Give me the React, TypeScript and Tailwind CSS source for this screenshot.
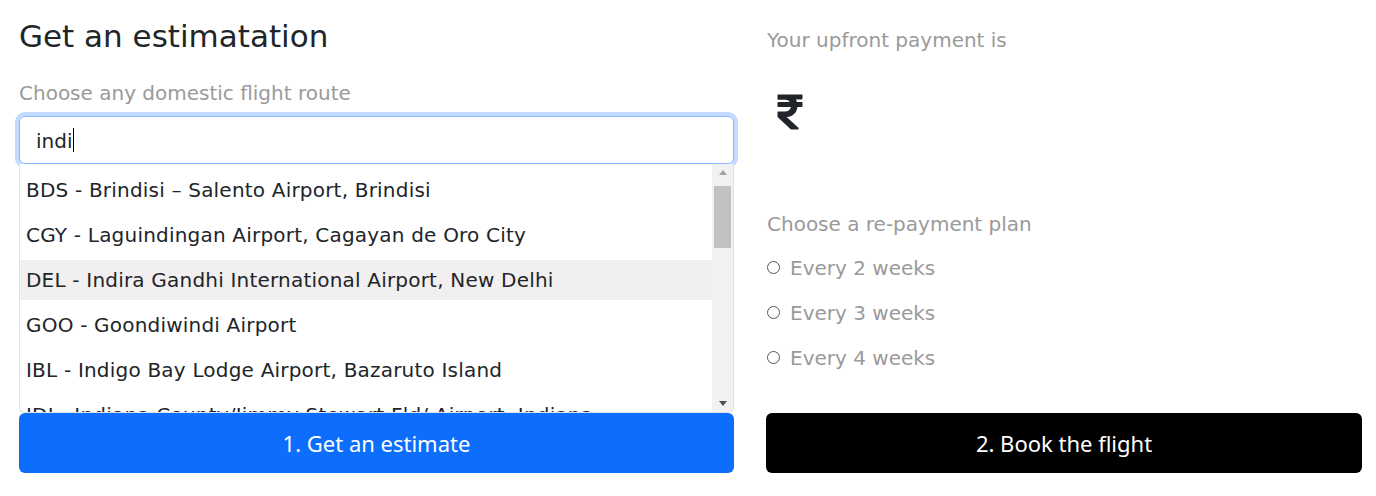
import React from 'react';
import { FaRupeeSign } from 'react-icons/fa';

const airports = [
  'BDS - Brindisi – Salento Airport, Brindisi',
  'CGY - Laguindingan Airport, Cagayan de Oro City',
  'DEL - Indira Gandhi International Airport, New Delhi',
  'GOO - Goondiwindi Airport',
  'IBL - Indigo Bay Lodge Airport, Bazaruto Island',
  'IDI - Indiana County/Jimmy Stewart Fld/ Airport, Indiana',
];

const plans = ['Every 2 weeks', 'Every 3 weeks', 'Every 4 weeks'];

function Scrollbar() {
  return (
    <div className="flex w-[21px] shrink-0 flex-col items-center bg-[#f1f1f1]">
      <div className="flex h-[17px] w-full items-center justify-center">
        <div className="h-0 w-0 border-x-[4px] border-b-[5px] border-x-transparent border-b-[#a3a3a3]" />
      </div>
      <div className="mt-[5px] h-[62px] w-[17px] bg-[#c1c1c1]" />
      <div className="flex-1" />
      <div className="flex h-[17px] w-full items-center justify-center">
        <div className="h-0 w-0 border-x-[4px] border-t-[5px] border-x-transparent border-t-[#505050]" />
      </div>
    </div>
  );
}

export default function App() {
  return (
    <div className="flex h-[496px] w-[1376px] gap-8 bg-white pl-[19px] font-['DejaVu_Sans',sans-serif]">
      <div className="flex w-[715px] shrink-0 flex-col pt-[17px]">
        <h2 className="text-[31px] leading-[38px] text-[#212529]">Get an estimatation</h2>
        <div className="mt-[23px] text-[20px] leading-[30px] text-[#9a9a9a]">Choose any domestic flight route</div>

        <div className="mt-[8px] flex h-[48px] items-center rounded-[6px] border border-[#86b7fe] px-4 text-[20px] text-[#212529] shadow-[0_0_0_4px_rgba(13,110,253,0.25)]">
          <span className="pt-px">indi</span>
          <span className="ml-px h-[24px] w-px bg-black" />
        </div>

        <div className="flex h-[249px] overflow-hidden rounded-b-[6px] border border-t-0 border-[#dee2e6] bg-white">
          <div className="flex flex-1 flex-col gap-[5px] pt-[6px] text-[20px] tracking-[0.2px] text-[#212529]">
            {airports.map((a, i) => (
              <div
                key={a}
                className={`flex h-[40px] shrink-0 items-center whitespace-nowrap px-[6px] ${i === 2 ? 'bg-[#f1efef]' : ''}`}
              >
                {a}
              </div>
            ))}
          </div>
          <Scrollbar />
        </div>

        <button className="h-[60px] w-full rounded-[6px] bg-[#0d6efd] font-['Noto_Sans',sans-serif] text-[22px] text-white">
          1. Get an estimate
        </button>
      </div>

      <div className="flex w-[596px] shrink-0 flex-col pt-[25px]">
        <div className="pl-px text-[20px] leading-[30px] text-[#9a9a9a]">Your upfront payment is</div>
        <FaRupeeSign className="ml-1 mt-[37px] h-[40px] w-[40px] text-[#212529]" />
        <div className="mt-[77px] pl-px text-[20px] leading-[30px] text-[#9a9a9a]">Choose a re-payment plan</div>
        <div className="mt-[6px] flex flex-col">
          {plans.map((p) => (
            <label key={p} className="flex h-[45px] items-center gap-[10px] pl-px text-[20px] text-[#9a9a9a]">
              <span className="h-[13px] w-[13px] rounded-full border border-[#555] bg-white" />
              {p}
            </label>
          ))}
        </div>
        <button className="mt-[33px] h-[60px] w-full rounded-[6px] bg-black font-['Noto_Sans',sans-serif] text-[22px] text-white">
          2. Book the flight
        </button>
      </div>
    </div>
  );
}
